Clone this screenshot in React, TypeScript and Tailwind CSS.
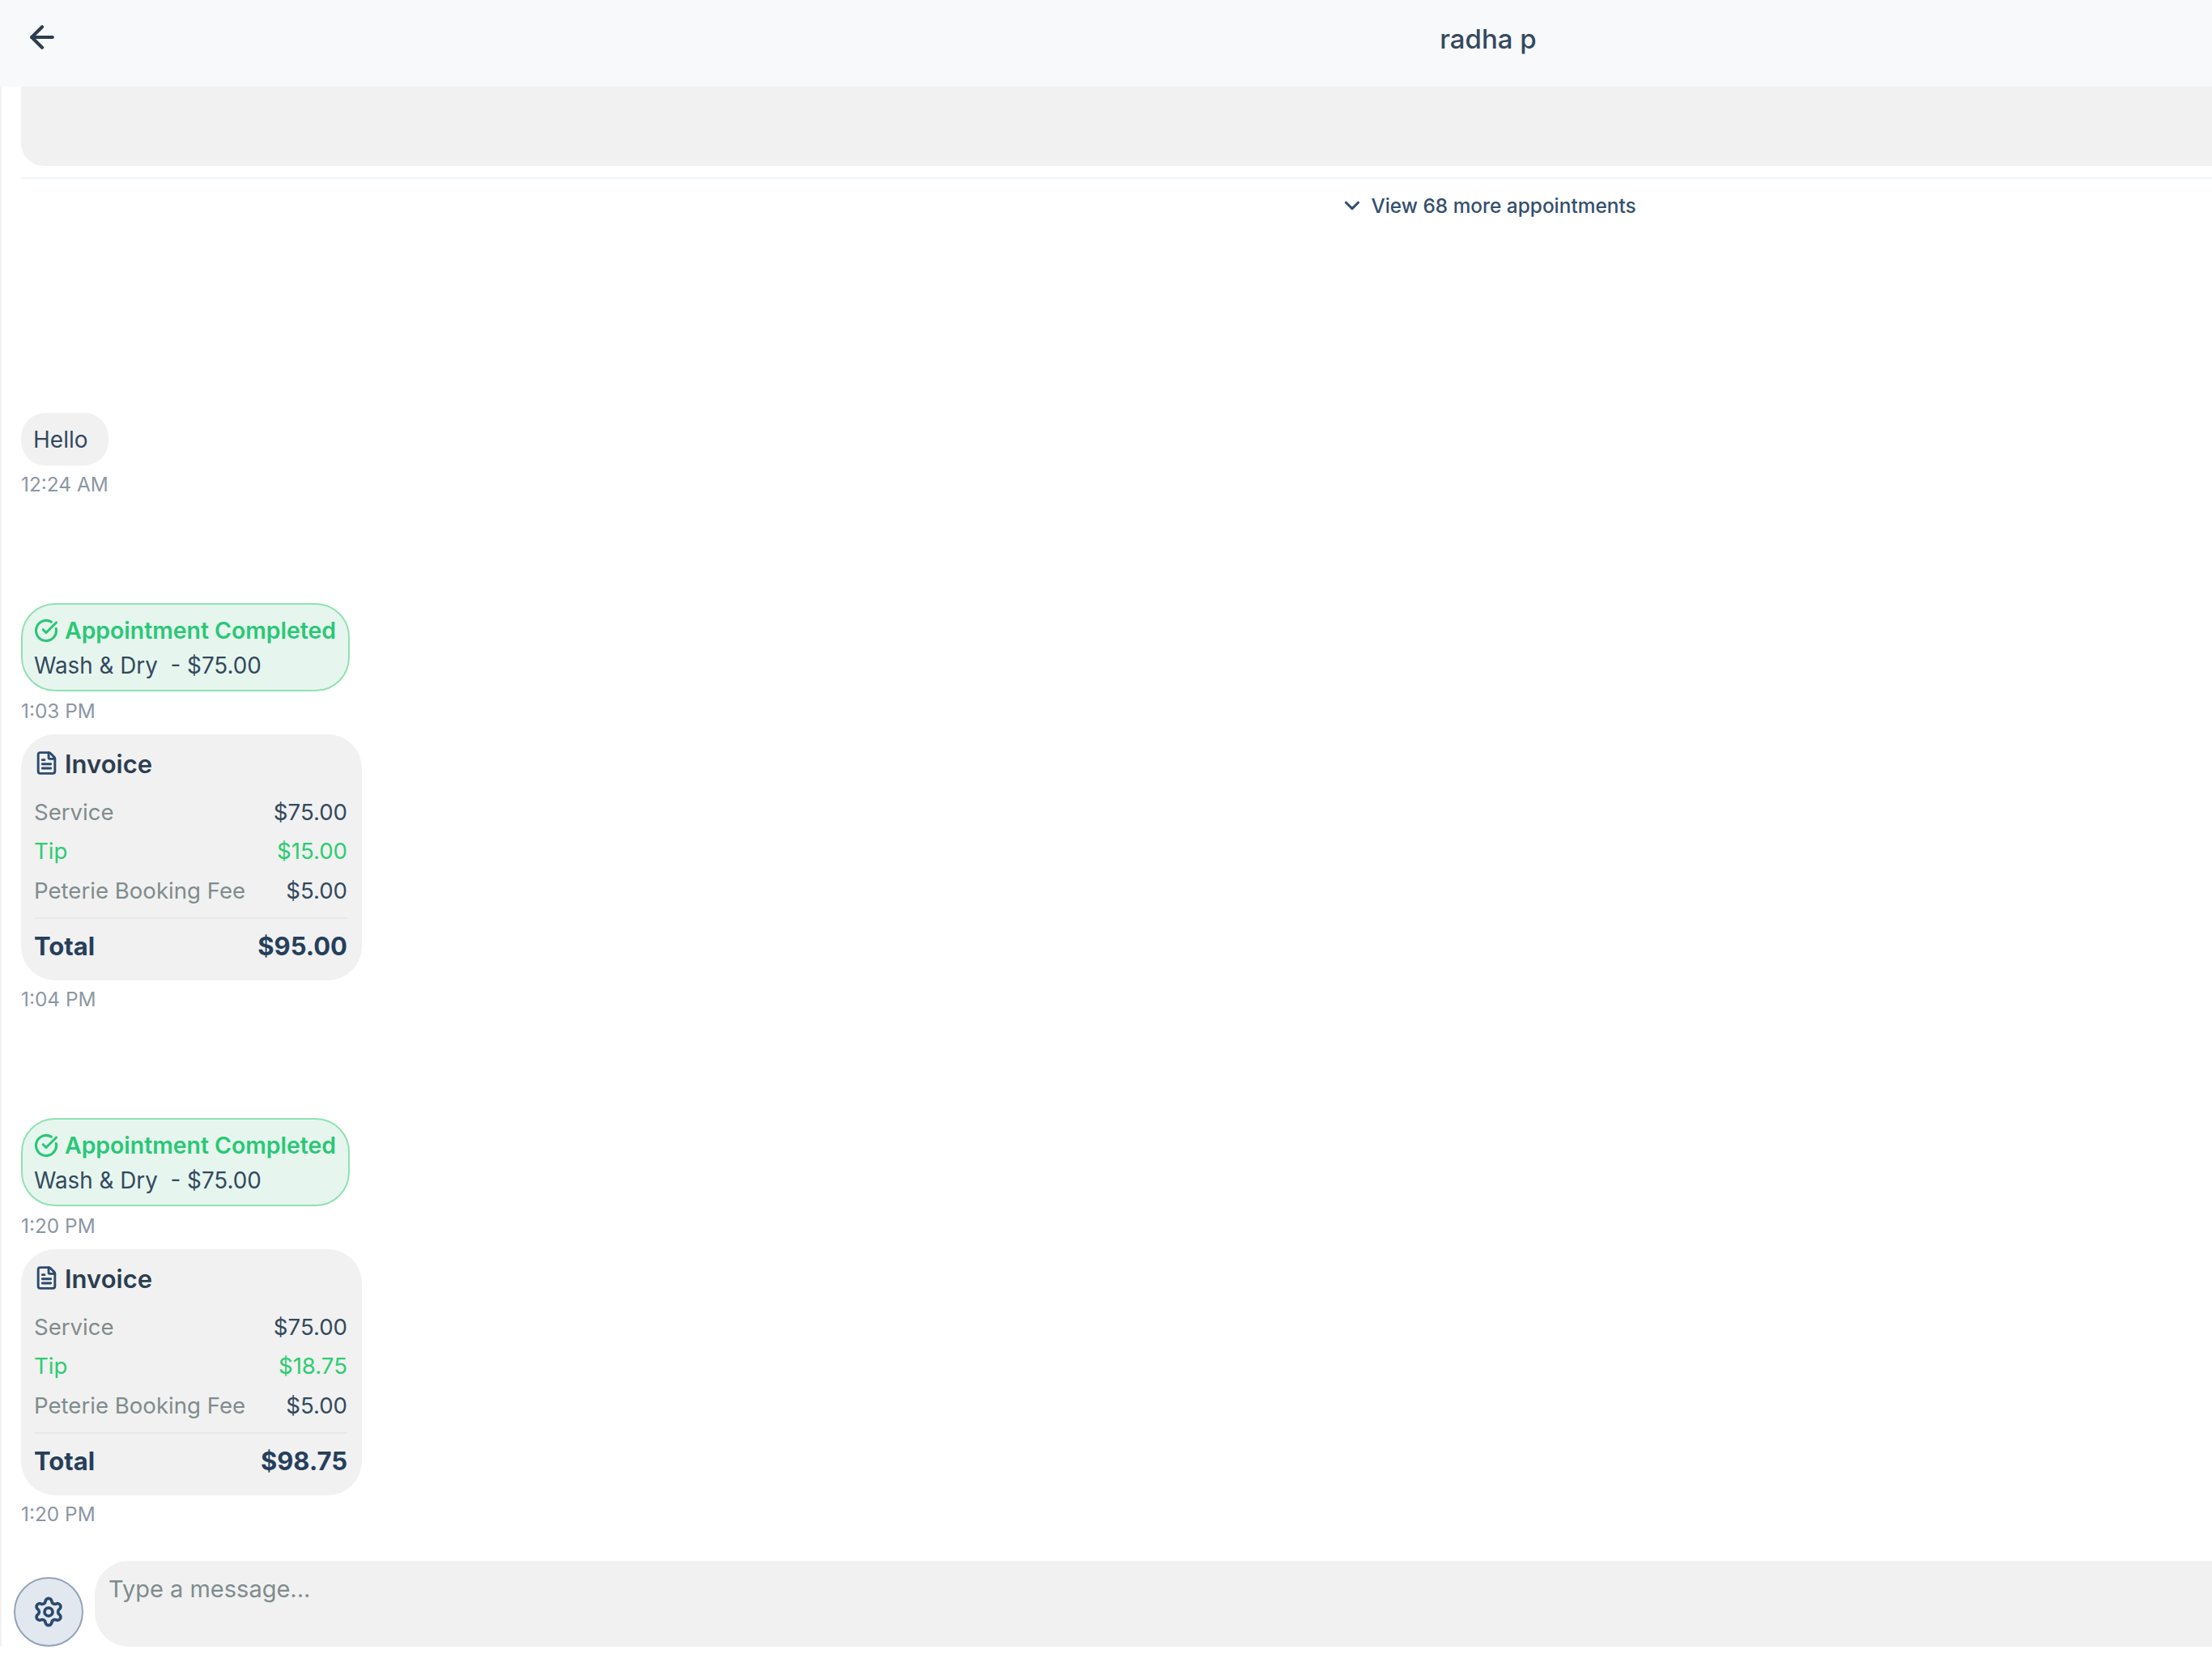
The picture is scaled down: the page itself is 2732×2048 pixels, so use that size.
import { ArrowLeft, ChevronDown, CircleCheckBig, FileText, Settings } from 'lucide-react';

const Time = ({ children, className = '' }: { children: string; className?: string }) => (
  <div className={`text-[24.4px] leading-[28px] text-[#8c97a5] ${className}`}>{children}</div>
);

const Row = ({ label, value, tip }: { label: string; value: string; tip?: boolean }) => (
  <div className="flex h-[48.5px] items-center justify-between text-[27.6px]">
    <span className={tip ? 'text-[#2ecc71]' : 'text-[#7f8c8d]'}>{label}</span>
    <span className={tip ? 'text-[#2ecc71]' : 'text-[#34495e]'}>{value}</span>
  </div>
);

const Visit = ({
  doneAt,
  tip,
  total,
  paidAt,
  className = '',
}: {
  doneAt: string;
  tip: string;
  total: string;
  paidAt: string;
  className?: string;
}) => (
  <div className={className}>
    <div className="h-[109px] w-[406px] rounded-[42px] border-2 border-[#8fe2b3] bg-[#e6f6ee] pl-[14px] pt-[14px]">
      <div className="flex h-[36px] items-center gap-[8px] text-[28.4px] font-semibold text-[#2ac777]">
        <CircleCheckBig size={30} strokeWidth={2.5} />
        Appointment Completed
      </div>
      <div className="mt-[5px] h-[40px] whitespace-pre text-[27.8px] leading-[40px] text-[#34495e]">
        {'Wash & Dry  - $75.00'}
      </div>
    </div>
    <Time className="mt-[10px]">{doneAt}</Time>
    <div className="mt-[15px] h-[304px] w-[421px] rounded-[42px] bg-[#f1f1f1] pl-[16px] pr-[18px] pt-[16px]">
      <div className="flex h-[42px] items-center gap-[7px] text-[31px] font-semibold text-[#2c3e50]">
        <FileText size={31} strokeWidth={2.25} className="-mt-[4px] text-[#2c4a6e]" />
        Invoice
      </div>
      <div className="mt-[14px]">
        <Row label="Service" value="$75.00" />
        <Row label="Tip" value={tip} tip />
        <Row label="Peterie Booking Fee" value="$5.00" />
      </div>
      <div className="mt-[8.5px] flex h-[70px] items-center justify-between border-t-2 border-[#e8e8e8] text-[31px] font-bold text-[#263f5c]">
        <span>Total</span>
        <span>{total}</span>
      </div>
    </div>
    <Time className="mt-[9px]">{paidAt}</Time>
  </div>
);

const App = () => {
  return (
    <div className="h-screen w-screen overflow-hidden bg-white font-['Inter',sans-serif]">
      <div className="w-[3676px]">
        <header className="relative flex h-[107px] items-center justify-center bg-[#f8f9fb] pb-[12px]">
          <button type="button" className="absolute left-[30px] top-[24px] text-[#2c3e50]" aria-label="Go back">
            <ArrowLeft size={44} strokeWidth={2.25} />
          </button>
          <h1 className="text-[33px] font-medium leading-[40px] text-[#34495e]">radha p</h1>
        </header>

        <div className="border-l-2 border-[#f2f2f2]">
          <div className="pl-[24px]">
            <div className="h-[98px] rounded-bl-[28px] bg-[#f1f1f1]" />
            <div className="mt-[14px] h-[2px] bg-[#f1f5f9]" />
            <button
              type="button"
              className="mt-[16px] flex h-[34px] w-full items-center justify-center gap-[8px] pr-[26px] text-[24.4px] font-medium text-[#34506e]"
            >
              <ChevronDown size={30} strokeWidth={2.5} />
              View 68 more appointments
            </button>

            <div className="mt-[239px] flex h-[65px] w-[108px] items-center rounded-[30px] bg-[#f1f1f1] pl-[15px] text-[28px] text-[#34495e]">
              Hello
            </div>
            <Time className="mt-[9px]">12:24 AM</Time>

            <Visit className="mt-[133px]" doneAt="1:03 PM" tip="$15.00" total="$95.00" paidAt="1:04 PM" />
            <Visit className="mt-[133px]" doneAt="1:20 PM" tip="$18.75" total="$98.75" paidAt="1:20 PM" />
          </div>

          <div className="mt-[44px] flex items-end gap-[14px] pl-[15px]">
            <button
              type="button"
              aria-label="Settings"
              className="flex h-[86px] w-[86px] shrink-0 items-center justify-center rounded-full border-2 border-[#94a3b8] bg-[#e2e8f0] text-[#2c4a6e]"
            >
              <Settings size={40} strokeWidth={2.25} />
            </button>
            <textarea
              placeholder="Type a message..."
              className="h-[106px] flex-1 resize-none rounded-[42px] bg-[#f1f1f1] px-[17px] py-[14px] text-[29px] leading-[42px] text-[#34495e] outline-none placeholder:text-[#7f8c8d]"
            />
          </div>
        </div>
      </div>
    </div>
  );
};

export default App;
